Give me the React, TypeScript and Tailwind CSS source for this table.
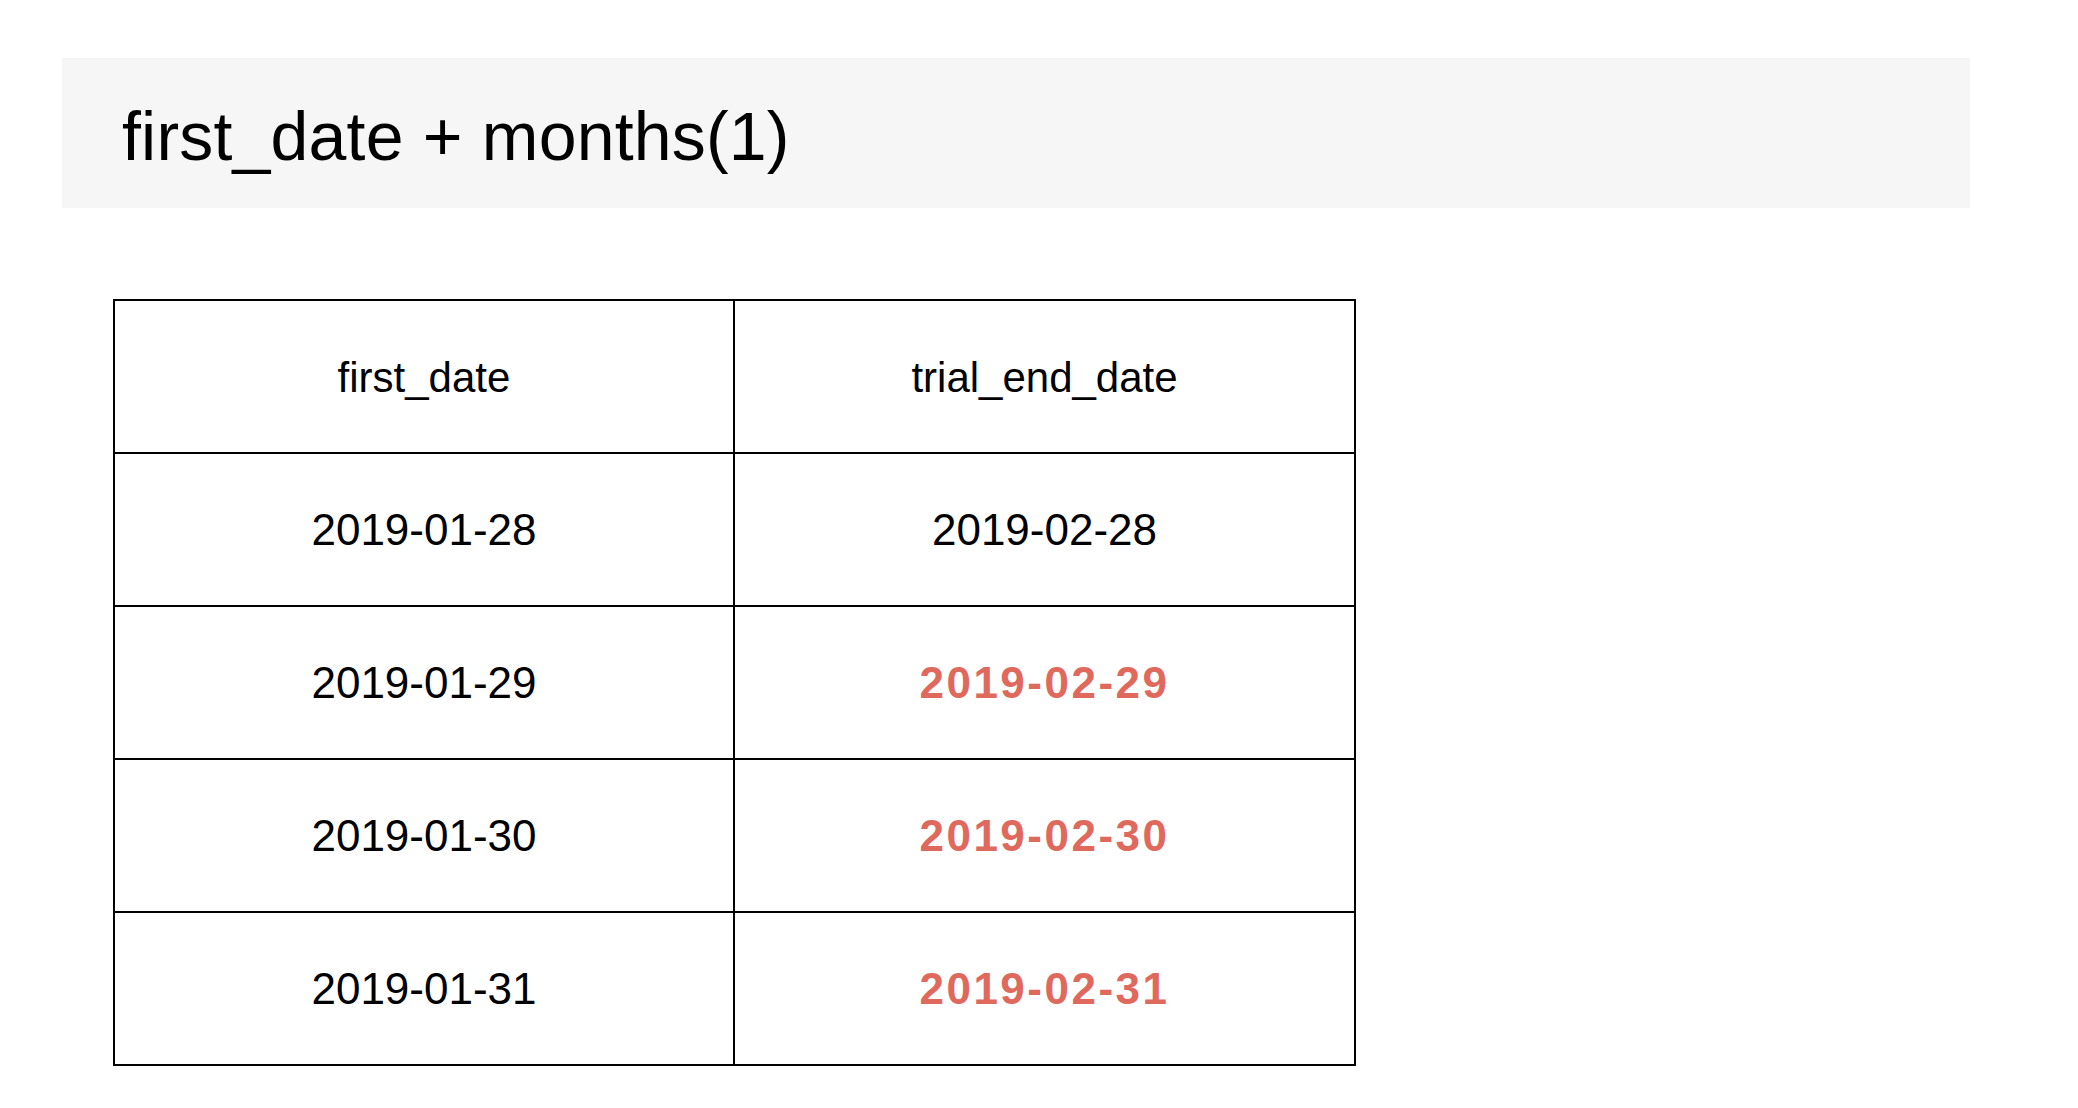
import React from "react";

const rows: { a: string; b: string; bad: boolean }[] = [
  { a: "2019-01-28", b: "2019-02-28", bad: false },
  { a: "2019-01-29", b: "2019-02-29", bad: true },
  { a: "2019-01-30", b: "2019-02-30", bad: true },
  { a: "2019-01-31", b: "2019-02-31", bad: true },
];

export default function App() {
  return (
    <div
      className="w-[2078px] h-[1108px] bg-white text-black overflow-hidden pt-[58px]"
      style={{ fontFamily: '"Liberation Sans", Arial, sans-serif' }}
    >
      <div className="ml-[62px] w-[1908px] h-[150px] bg-[#f6f6f6] flex items-center pl-[60px] pt-[6px]">
        <span className="text-[68px] leading-none tracking-[0.2px]">first_date + months(1)</span>
      </div>

      <div className="ml-[113px] mt-[91px] w-[1243px] border-2 border-black">
        <div className="flex h-[151px]">
          <div className="w-[620px] border-r-2 border-black flex items-center justify-center text-[42px] pt-[2px]">
            first_date
          </div>
          <div className="flex-1 flex items-center justify-center text-[42px] pt-[2px]">
            trial_end_date
          </div>
        </div>
        {rows.map((r) => (
          <div key={r.a} className="flex h-[153px] border-t-2 border-black">
            <div className="w-[620px] border-r-2 border-black flex items-center justify-center text-[44px] pt-[1px]">
              {r.a}
            </div>
            <div
              className={
                r.bad
                  ? "flex-1 flex items-center justify-center text-[44px] pt-[1px] font-bold text-[#e0695e] tracking-[2.5px]"
                  : "flex-1 flex items-center justify-center text-[44px] pt-[1px]"
              }
            >
              {r.b}
            </div>
          </div>
        ))}
      </div>
    </div>
  );
}
